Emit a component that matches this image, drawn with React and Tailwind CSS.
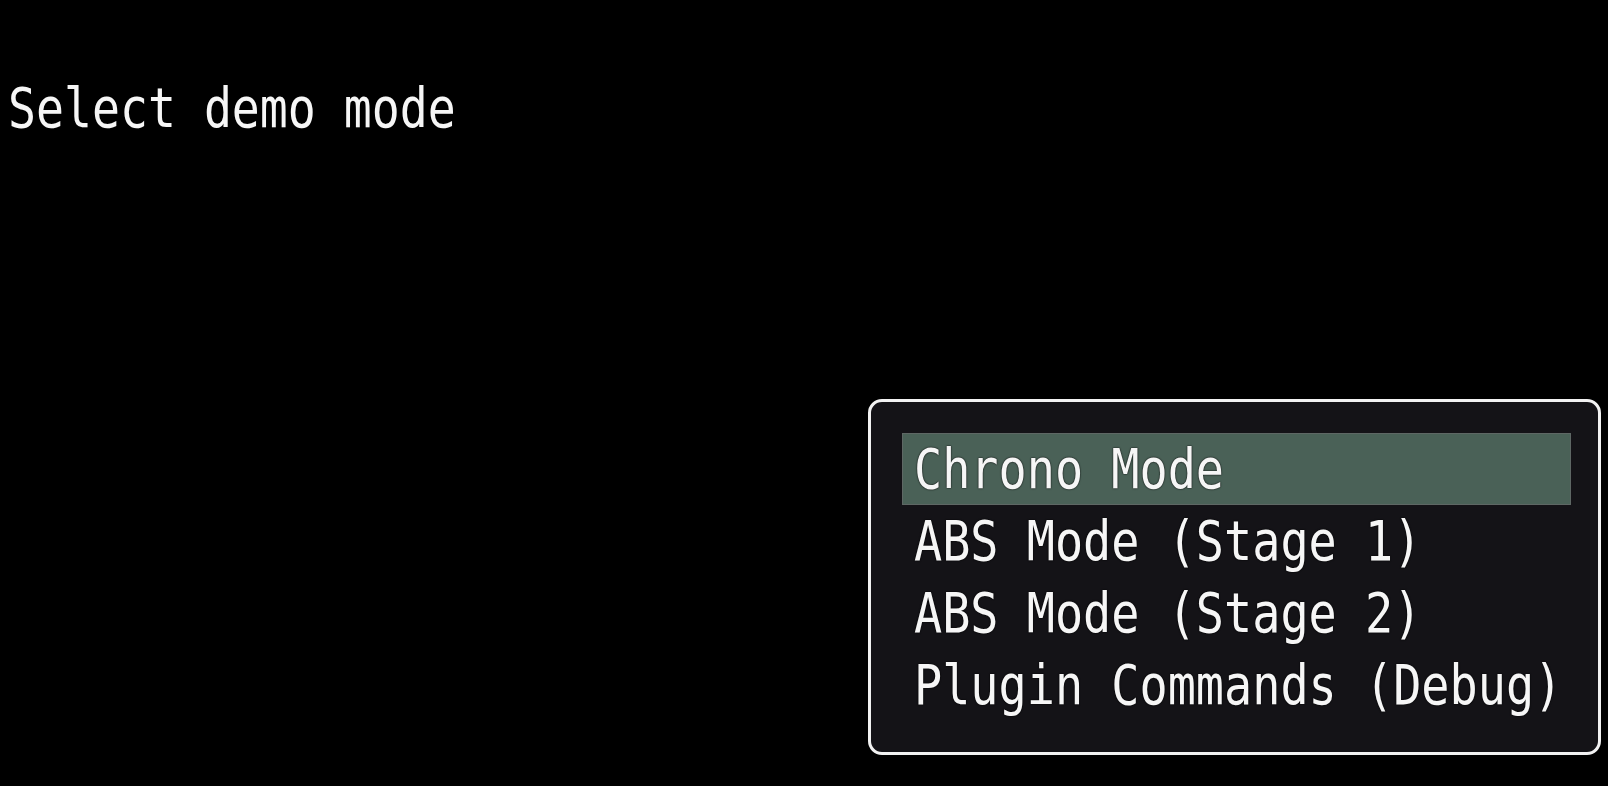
import React from "react";

const items = [
  "Chrono Mode",
  "ABS Mode (Stage 1)",
  "ABS Mode (Stage 2)",
  "Plugin Commands (Debug)",
];

const MonoText = ({ children, wide }) => (
  <span
    className={`inline-block origin-left whitespace-pre ${
      wide ? "scale-x-[0.836]" : "scale-x-[0.83]"
    }`}
  >
    {children}
  </span>
);

export default function App() {
  const selected = 0;

  return (
    <div
      className="w-[1608px] h-[786px] bg-black text-[#f6f6f6] flex flex-col overflow-hidden"
      style={{ fontFamily: '"DejaVu Sans Mono", monospace' }}
    >
      {/* heading */}
      <div className="pt-[72px] pl-[8px] text-[56px] leading-[72px] [text-shadow:0_0_2px_rgba(0,0,0,0.9)]">
        <MonoText>Select demo mode</MonoText>
      </div>

      {/* command window */}
      <div className="flex-1 flex items-end justify-end pr-[7px] pb-[31px]">
        <div className="w-[733px] h-[356px] border-[3px] border-[#f2f2f2] rounded-[14px] bg-[#141317] pt-[31px] pl-[31px] pr-[27px]">
          <div className="flex flex-col">
            {items.map((label, i) => (
              <div
                key={label}
                className={`h-[72px] pl-[12px] text-[56px] leading-[72px] [text-shadow:0_0_2px_rgba(0,0,0,0.85),0_0_1px_rgba(0,0,0,0.85)] ${
                  i === selected
                    ? "bg-[#4a6157] outline outline-1 -outline-offset-1 outline-[#5e6764]"
                    : ""
                }`}
              >
                <MonoText wide>{label}</MonoText>
              </div>
            ))}
          </div>
        </div>
      </div>
    </div>
  );
}
